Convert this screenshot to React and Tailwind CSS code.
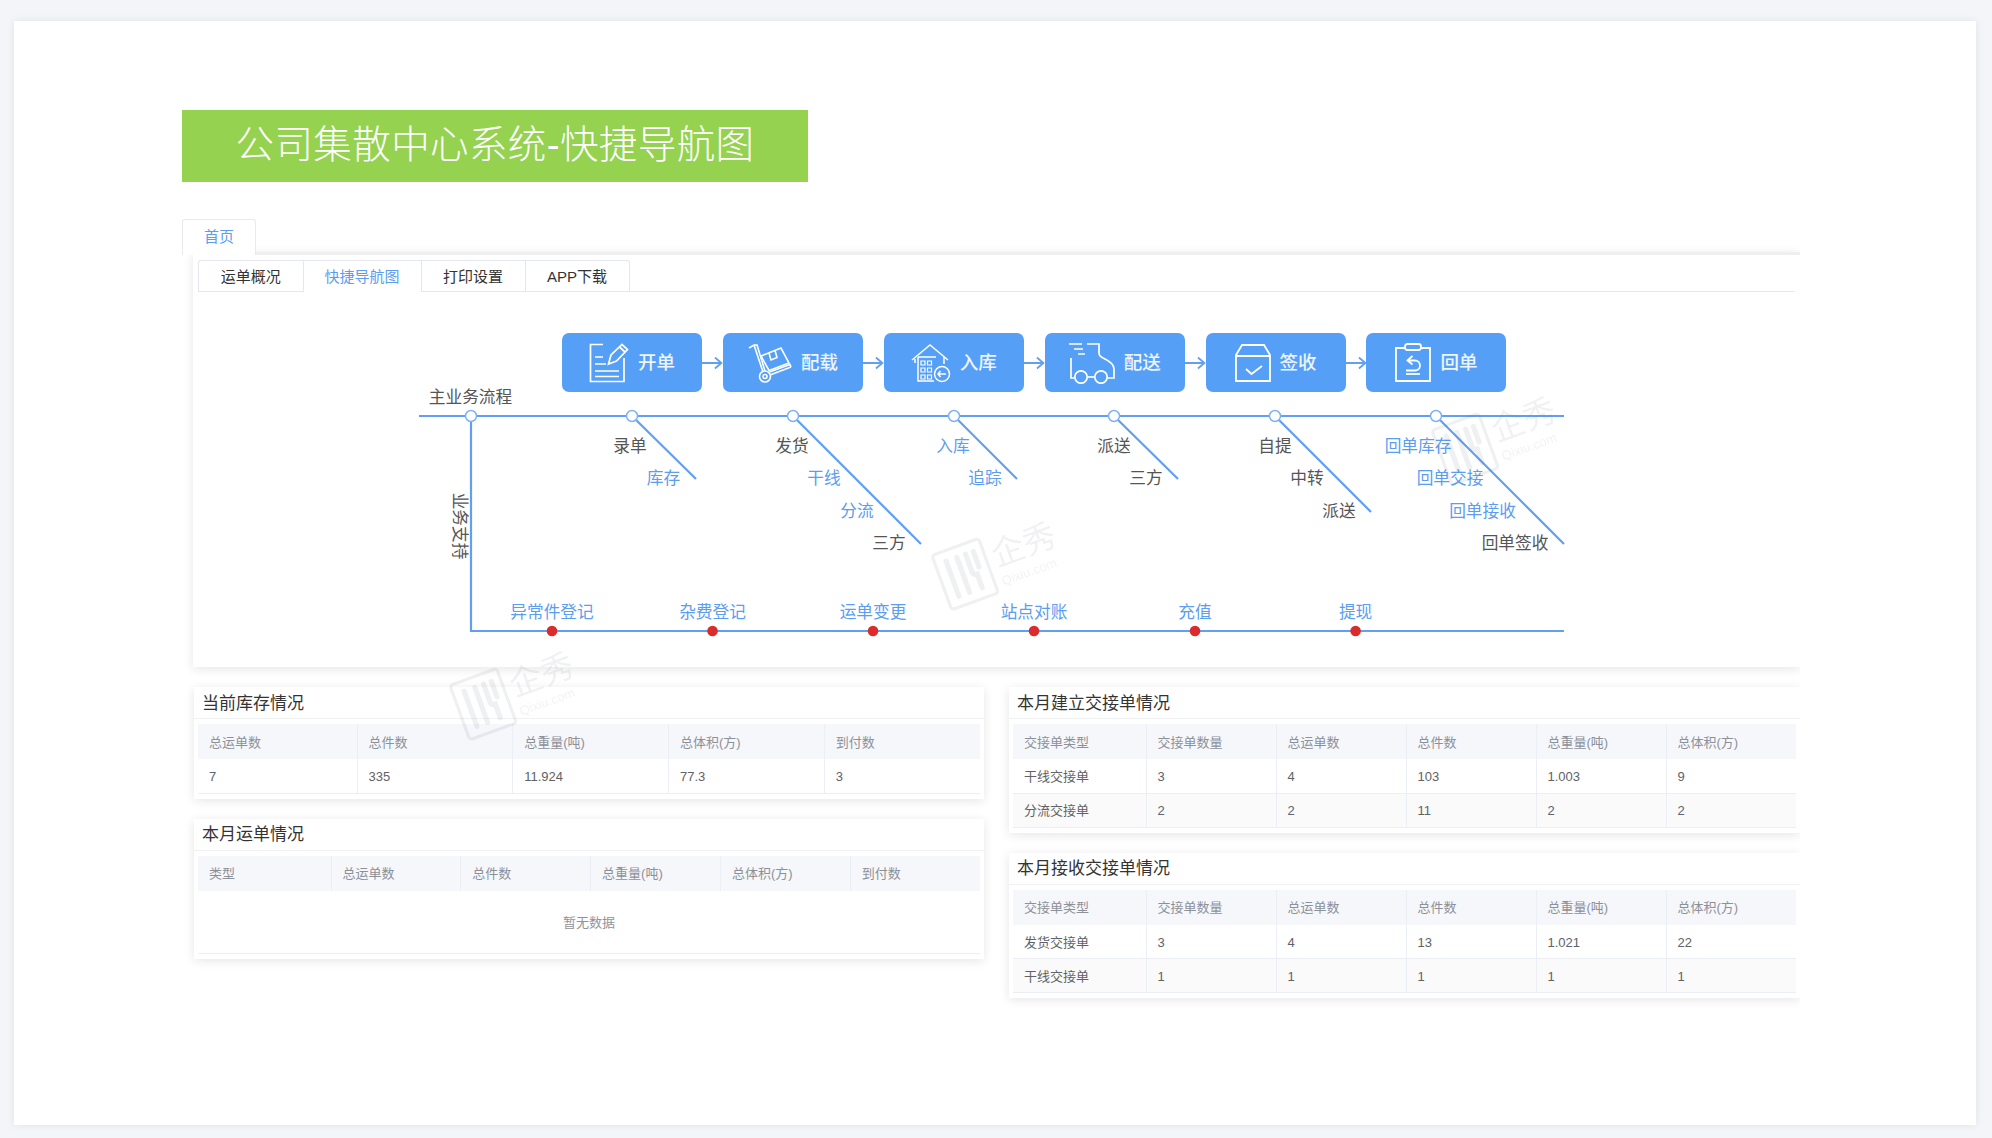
const OX = 193;
const OY = 292;

const Doc = () => (
  <svg width="40" height="40" viewBox="0 0 40 40" fill="none" stroke="white" strokeWidth="1.7">
    <path d="M14 1.5H1.5V38.5H35V15" />
    <path d="M6 14H14M6 21H17M6 28H30M6 33.5H30" />
    <path d="M19.5 21L22 12L33 1.5L38.5 6.5L27.5 18Z" />
    <path d="M30.5 4L36 9" />
  </svg>
);

const Cart = () => (
  <svg width="44" height="40" viewBox="0 0 44 40" fill="none" stroke="white" strokeWidth="1.6">
    <path d="M1 5L6 2H9L17 28" />
    <path d="M6 2L15 29" />
    <circle cx="17" cy="33.5" r="5.5" />
    <circle cx="17" cy="33.5" r="2" />
    <path d="M22 32L43 24M21.5 29L42 21.5L43 24" />
    <path d="M13 13L33 5L41 20L21 27.5Z" />
    <path d="M21 10L23 17L29 14.5L27 7.5" />
  </svg>
);

const Depot = () => (
  <svg width="40" height="40" viewBox="0 0 40 40" fill="none" stroke="white" strokeWidth="1.5">
    <path d="M1 17L19 2L37 17" />
    <path d="M4 16V20M33 14V21" />
    <path d="M7 14V38H23M7 14H25" />
    <path d="M10 18h4v4h-4zM16.5 18h4v4h-4zM10 25h4v4h-4zM16.5 25h4v4h-4zM10 32h4v4h-4zM16.5 32h4v4h-4z" strokeWidth="1.2" />
    <circle cx="31" cy="31" r="7.5" />
    <path d="M35 31H27M29.5 28L27 31L29.5 34" />
  </svg>
);

const Truck = () => (
  <svg width="46" height="42" viewBox="0 0 46 42" fill="none" stroke="white" strokeWidth="1.7">
    <path d="M0 2H13M18 2H30V11Q30 14 34 16Q45 21 45 27V36H39" />
    <path d="M5 7H14M9 12H16" />
    <path d="M2 16V36H5" />
    <circle cx="12" cy="35" r="6.2" />
    <circle cx="32" cy="35" r="6.2" />
    <path d="M18.5 35H25.5" />
  </svg>
);

const Box = () => (
  <svg width="36" height="38" viewBox="0 0 36 38" fill="none" stroke="white" strokeWidth="1.8">
    <path d="M7 1H29L35 11V37H1V11Z" />
    <path d="M1 12H35" />
    <path d="M11 25L16.5 30L27 22" />
  </svg>
);

const Receipt = () => (
  <svg width="36" height="40" viewBox="0 0 36 40" fill="none" stroke="white" strokeWidth="1.8">
    <path d="M10 5H1V38H35V5H26" />
    <rect x="10" y="1" width="16" height="6" rx="2.5" />
    <path d="M17.5 13L12.5 17.5L17.5 21.5" />
    <path d="M13 17.5H20A5 5 0 0 1 20 27.5H11" />
    <path d="M11 31H25" />
  </svg>
);

const flow = [
  { name: '开单', icon: Doc },
  { name: '配载', icon: Cart },
  { name: '入库', icon: Depot },
  { name: '配送', icon: Truck },
  { name: '签收', icon: Box },
  { name: '回单', icon: Receipt },
];

const nodes = [632, 793, 954, 1114, 1275, 1436];
const dots = [552, 712.5, 873, 1034, 1195, 1355.6];
const bones = [
  [632, 696, 479],
  [793, 921, 544],
  [954, 1017, 479],
  [1114, 1178, 479],
  [1275, 1371, 512],
  [1436, 1564, 544],
];

const blue = 'text-[#5b9df0]';
const gray = 'text-[#555555]';

const labels = [
  ['录单', 630, 447, gray], ['库存', 663.5, 479, blue],
  ['发货', 792, 447, gray], ['干线', 824, 479, blue], ['分流', 857, 512, blue], ['三方', 889, 544, gray],
  ['入库', 953, 447, blue], ['追踪', 985, 479, blue],
  ['派送', 1114, 447, gray], ['三方', 1146, 479, gray],
  ['自提', 1275, 447, gray], ['中转', 1307, 479, gray], ['派送', 1339, 512, gray],
  ['回单库存', 1418, 447, blue], ['回单交接', 1450, 479, blue], ['回单接收', 1482.5, 512, blue], ['回单签收', 1515, 544, gray],
  ['异常件登记', 552, 613, blue], ['杂费登记', 712.5, 613, blue], ['运单变更', 873, 613, blue],
  ['站点对账', 1034, 613, blue], ['充值', 1195, 613, blue], ['提现', 1355.6, 613, blue],
  ['主业务流程', 470.5, 398, gray],
];

function Diagram() {
  return (
    <div className="relative h-[375px]">
      <svg className="absolute inset-0" width="1607" height="375" viewBox={`${OX} ${OY} 1607 375`} fill="none">
        <path d="M419 416H1564M471 416V631H1564" stroke="#629ff2" strokeWidth="2.2" />
        {bones.map(([x, ex, ey]) => (
          <path key={x} d={`M${x} 416L${ex} ${ey}`} stroke="#629ff2" strokeWidth="2.2" />
        ))}
        {[471, ...nodes].map((x) => (
          <circle key={x} cx={x} cy="416" r="5.5" fill="white" stroke="#7fb2f4" strokeWidth="1.5" />
        ))}
        {dots.map((x) => (
          <circle key={x} cx={x} cy="631" r="5.3" fill="#dc2b2b" />
        ))}
      </svg>

      <div className="relative flex pl-[369px] pt-[41px]">
        {flow.map((step, i) => (
          <div key={step.name} className="flex items-center">
            <div className="flex h-[59px] w-[140px] items-center justify-center gap-[9px] rounded-[7px] bg-[#559ff7] text-[18.5px] font-medium text-white/90">
              <step.icon />
              <span className="pt-[1px]">{step.name}</span>
            </div>
            {i < flow.length - 1 && (
              <svg width="20.9" height="14" viewBox="0 0 21 14" fill="none" stroke="#629ff2" strokeWidth="1.8">
                <path d="M0 7H19M13 1.5L19.5 7L13 12.5" />
              </svg>
            )}
          </div>
        ))}
      </div>

      {labels.map(([text, x, y, color]) => (
        <span
          key={text + x}
          className={`absolute -translate-x-1/2 -translate-y-1/2 whitespace-nowrap text-[16.7px] ${color}`}
          style={{ left: x - OX, top: y - OY }}
        >
          {text}
        </span>
      ))}
      <span className={`absolute left-[266px] top-[234px] -translate-x-1/2 -translate-y-1/2 rotate-90 whitespace-nowrap text-[16.7px] ${gray}`}>
        业务支持
      </span>
    </div>
  );
}

function Card({ title, firstCol, head, rows, empty }) {
  return (
    <div className="bg-white px-[4px] pb-[5px] shadow-[0_2px_10px_rgba(0,0,0,0.1)]">
      <div className="-mx-[4px] flex h-[32px] items-center border-b border-[#f0f1f3] pl-[8px] pt-[2px] text-[17px] text-[#333]">{title}</div>
      <table className="mt-[5px] w-full table-fixed border-collapse text-[13px]">
        <colgroup>
          <col className={firstCol} />
        </colgroup>
        <thead>
          <tr className="h-[35px] bg-[#f5f7fa] text-left text-[#8c9099]">
            {head.map((h) => (
              <th key={h} className="border-r border-[#ebeef5] pl-[11px] pt-[2px] font-normal last:border-r-0">{h}</th>
            ))}
          </tr>
        </thead>
        <tbody className="text-[#606266]">
          {rows.map((row, i) => (
            <tr key={i} className="h-[34px] border-b border-[#ebeef5] even:bg-[#fafafa]">
              {row.map((c, j) => (
                <td key={j} className="border-r border-[#ebeef5] pl-[11px] pt-[2px] last:border-r-0">{c}</td>
              ))}
            </tr>
          ))}
          {empty && (
            <tr className="h-[63px] border-b border-[#ebeef5]">
              <td colSpan={head.length} className="pt-[2px] text-center text-[#909399]">暂无数据</td>
            </tr>
          )}
        </tbody>
      </table>
    </div>
  );
}

function Watermark({ className }) {
  return (
    <div className={`pointer-events-none absolute flex -rotate-[20deg] items-center gap-[5px] text-[#5f6b80]/10 ${className}`}>
      <svg width="54" height="62" viewBox="0 0 52 60" fill="none" stroke="currentColor">
        <rect x="2" y="2" width="48" height="56" rx="3" strokeWidth="3" />
        <path d="M13 12V48M24 12V48M33 12V30Q33 34 37 34V48M41 12V28" strokeWidth="5" strokeLinecap="round" />
      </svg>
      <div className="flex flex-col">
        <span className="text-[33px] leading-[38px]">企秀</span>
        <span className="text-[13px] leading-[15px]">Qixiu.com</span>
      </div>
    </div>
  );
}

const handoverHead = ['交接单类型', '交接单数量', '总运单数', '总件数', '总重量(吨)', '总体积(方)'];

export default function App() {
  return (
    <div className="h-[1138px] overflow-hidden bg-[#f4f5f8] pl-[14px] pr-[16px] pt-[21px] font-['Liberation_Sans','Noto_Sans_CJK_SC',sans-serif]">
      <div className="relative h-[1104px] bg-white pl-[168px] pt-[89px] shadow-[0_0_8px_rgba(0,0,0,0.08)]">
        <div className="flex h-[72px] w-[626px] items-center justify-center bg-[#94d24f] pb-[3px] text-[38.5px] font-light tracking-[0.4px] text-white">
          公司集散中心系统-快捷导航图
        </div>

        <div className="mt-[37px] w-[1618px] overflow-hidden pb-[40px]">
          <div className="relative z-10 -mb-[3px] flex h-[36px] w-[74px] items-center justify-center rounded-t-[3px] border border-b-0 border-[#e8eaee] bg-white text-[15px] text-[#5b9df0]">
            首页
          </div>

          <div className="ml-[11px] w-[1607px]">
            <div className="border-t-[3px] border-[#eeeff1] bg-white shadow-[0_2px_10px_rgba(0,0,0,0.1)]">
              <div className="mx-[5px] mt-[5px] flex h-[32px] border-b border-[#e4e7ed] text-[15px] text-[#333]">
                <div className="flex w-[104.5px] items-center justify-center rounded-tl-[3px] border-l border-t border-[#e4e7ed] pt-[2px]">运单概况</div>
                <div className="flex h-[32px] w-[118px] items-center justify-center border-l border-t border-[#e4e7ed] bg-white pt-[2px] text-[#5b9df0]">快捷导航图</div>
                <div className="flex w-[104px] items-center justify-center border-l border-t border-[#e4e7ed] pt-[2px]">打印设置</div>
                <div className="flex w-[105px] items-center justify-center rounded-tr-[3px] border-l border-r border-t border-[#e4e7ed] pt-[2px]">APP下载</div>
              </div>
              <Diagram />
            </div>

            <div className="mt-[20px] flex gap-[25px] pl-[1px]">
              <div className="flex w-[790px] flex-col gap-[20px]">
                <Card
                  title="当前库存情况"
                  firstCol="w-[159px]"
                  head={['总运单数', '总件数', '总重量(吨)', '总体积(方)', '到付数']}
                  rows={[['7', '335', '11.924', '77.3', '3']]}
                />
                <Card
                  title="本月运单情况"
                  firstCol="w-[133px]"
                  head={['类型', '总运单数', '总件数', '总重量(吨)', '总体积(方)', '到付数']}
                  rows={[]}
                  empty
                />
              </div>
              <div className="flex w-[791px] flex-col gap-[20px]">
                <Card
                  title="本月建立交接单情况"
                  firstCol="w-[133px]"
                  head={handoverHead}
                  rows={[
                    ['干线交接单', '3', '4', '103', '1.003', '9'],
                    ['分流交接单', '2', '2', '11', '2', '2'],
                  ]}
                />
                <Card
                  title="本月接收交接单情况"
                  firstCol="w-[133px]"
                  head={handoverHead}
                  rows={[
                    ['发货交接单', '3', '4', '13', '1.021', '22'],
                    ['干线交接单', '1', '1', '1', '1', '1'],
                  ]}
                />
              </div>
            </div>
          </div>
        </div>

        <Watermark className="left-[1422px] top-[385px]" />
        <Watermark className="left-[922px] top-[510px]" />
        <Watermark className="left-[440px] top-[640px]" />
      </div>
    </div>
  );
}
